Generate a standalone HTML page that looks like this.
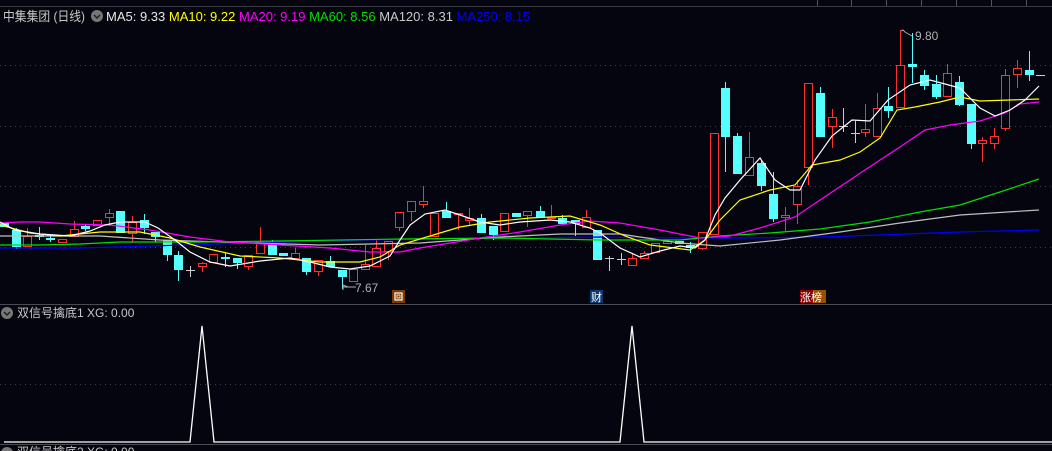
<!DOCTYPE html>
<html><head><meta charset="utf-8"><style>
html,body{margin:0;padding:0;background:#05050f;width:1052px;height:451px;overflow:hidden}
svg{display:block}
text{font-family:"Liberation Sans","Noto Sans CJK SC",sans-serif}
</style></head><body>
<svg id="s" width="1052" height="451" xmlns="http://www.w3.org/2000/svg">
<rect width="1052" height="451" fill="#05050f"/>
<line x1="0" y1="6.5" x2="1052" y2="6.5" stroke="#3a3a44"/>
<g stroke="#555" stroke-width="1">
<line x1="817.5" y1="0" x2="817.5" y2="6"/><line x1="851.5" y1="0" x2="851.5" y2="6"/><line x1="886.5" y1="0" x2="886.5" y2="6"/><line x1="921.5" y1="0" x2="921.5" y2="6"/><line x1="956.5" y1="0" x2="956.5" y2="6"/><line x1="991.5" y1="0" x2="991.5" y2="6"/><line x1="1026.5" y1="0" x2="1026.5" y2="6"/></g>
<g stroke="#3c3c46" stroke-dasharray="1,4">
<line x1="0" y1="65.5" x2="1052" y2="65.5"/><line x1="0" y1="126.5" x2="1052" y2="126.5"/><line x1="0" y1="186.5" x2="1052" y2="186.5"/><line x1="0" y1="247.5" x2="1052" y2="247.5"/><line x1="0" y1="384.5" x2="1052" y2="384.5"/></g>
<text x="3" y="21" font-size="13" fill="#c8c8c8" textLength="82" lengthAdjust="spacingAndGlyphs">中集集团 (日线)</text>
<circle cx="97" cy="16" r="6" fill="#777"/><path d="M94 15 L97 18 L100 15" stroke="#222" stroke-width="1.5" fill="none"/>
<text x="106" y="21" font-size="13"><tspan fill="#e8e8e8">MA5: 9.33 </tspan><tspan fill="#ffff00">MA10: 9.22 </tspan><tspan fill="#ff00ff">MA20: 9.19 </tspan><tspan fill="#00e000">MA60: 8.56 </tspan><tspan fill="#c8c8c8">MA120: 8.31 </tspan><tspan fill="#0000ff">MA250: 8.15</tspan></text>
<g id="c"></g>
<g fill="none" stroke-width="1.2">
<polyline stroke="#0000ff" points="0,248 80,248 150,246 250,243 360,240 440,239 520,238 600,237 680,238 740,238 820,237 880,235 960,232 1039,230"/>
<polyline stroke="#c0c0c0" points="0,236 40,236 100,236 160,240 220,242 320,245 420,243 500,237 560,234 620,234 680,243 720,246 780,240 840,232 900,223 960,215 1039,210"/>
<polyline stroke="#00e000" points="0,245 40,245 80,244 120,242 200,242 280,241 400,239 500,238 600,240 680,240 720,236 770,233 820,229 870,222 920,212 960,205 1000,192 1039,179"/>
<polyline stroke="#ff00ff" points="0,223 20,222 40,222 70,224 110,225 150,230 190,237 230,242 280,245 330,248 370,252 400,252 420,248 450,243 480,238 520,232 560,225 590,221 620,223 660,230 700,238 730,236 760,228 795,217 820,200 850,180 880,160 900,147 925,130 950,125 980,121 1005,113 1020,104 1039,102"/>
<polyline stroke="#ffff00" points="0,225 30,233 60,236 100,232 140,232 170,238 200,247 240,256 280,258 320,262 360,262 380,257 400,245 430,236 460,227 490,222 530,218 570,216 600,225 625,236 650,245 690,250 705,240 720,220 740,200 770,190 795,185 812,165 840,160 860,152 880,138 897,110 915,107 940,102 960,97 980,101 1010,100 1039,99"/>
<polyline stroke="#ffffff" points="0,222 15,230 40,234 70,236 90,231 105,225 120,222 145,222 158,228 175,240 190,252 210,262 230,266 260,261 290,258 310,262 330,267 350,269 370,266 390,256 400,240 410,225 425,214 445,210 460,215 480,222 500,225 520,222 550,220 570,222 590,228 600,233 620,248 640,257 660,251 680,246 695,248 705,240 715,215 725,198 740,180 760,158 775,180 790,190 800,190 815,160 832,136 852,120 870,121 888,100 910,85 930,80 945,84 960,88 980,108 995,116 1010,110 1025,100 1039,86"/>
</g>
<path d="M348 287 L343 285 L343 290 M343 287 L356 287" stroke="#aaa" fill="none"/>
<text x="355" y="292" font-size="12" fill="#b0b0b0">7.67</text>
<path d="M901 31 L903 30 L905 32 L912 36" stroke="#aaa" fill="none"/>
<text x="915" y="40" font-size="12" fill="#b0b0b0">9.80</text>
<rect x="392" y="290" width="13" height="13" fill="#7a3a00"/><rect x="395" y="293" width="7" height="7" fill="none" stroke="#fff" stroke-width="1.2"/><rect x="397" y="295" width="3" height="3" fill="none" stroke="#fff" stroke-width="0.8"/>
<rect x="590" y="290" width="13" height="13" fill="#0b3a6e"/><text x="591" y="301" font-size="11" fill="#fff">财</text>
<rect x="800" y="290" width="13" height="13" fill="#8a0000"/><rect x="813" y="290" width="13" height="13" fill="#9a5000"/><text x="800" y="301" font-size="11" fill="#fff">涨榜</text>
<line x1="0" y1="304.5" x2="1052" y2="304.5" stroke="#4a4a52"/>
<circle cx="7" cy="313" r="6" fill="#777"/><path d="M4 312 L7 315 L10 312" stroke="#222" stroke-width="1.5" fill="none"/>
<text x="17" y="317" font-size="12" fill="#c8c8c8">双信号擒底1 XG: 0.00</text>
<polyline fill="none" stroke="#fff" stroke-width="1.3" points="4,442 190,442 202,326 214,442 620,442 632,326 644,442 1052,442"/>
<line x1="0" y1="444.5" x2="1052" y2="444.5" stroke="#4a4a52"/>
<circle cx="7" cy="453" r="6" fill="#777"/>
<text x="17" y="456" font-size="12" fill="#c8c8c8">双信号擒底2 XG: 0.00</text>
</svg>
<script>
var d=[[4,223,227,223,227,'c'],[16,230,247,228,249,'c'],[27,236,247,228,247,'r'],[39,235,237,227,240,'c'],[50,238,240,236,242,'c'],[62,239,243,239,243,'r'],[74,229,237,221,237,'r'],[85,226,229,224,231,'c'],[97,220,226,220,226,'r'],[109,213,218,209,226,'r'],[120,211,233,211,233,'c'],[132,222,234,216,243,'r'],[144,220,228,214,234,'c'],[155,232,237,232,242,'c'],[167,240,255,240,261,'c'],[178,255,270,251,281,'c'],[190,270,270,266,277,'w'],[202,263,267,262,272,'r'],[213,254,263,254,263,'r'],[225,257,259,253,267,'c'],[237,258,263,258,269,'c'],[248,255,267,255,270,'r'],[260,242,254,227,254,'r'],[272,245,255,240,255,'c'],[283,253,256,253,256,'c'],[295,253,259,248,259,'r'],[306,258,272,258,275,'c'],[318,260,272,260,276,'r'],[330,261,267,256,267,'c'],[342,270,277,270,289,'c'],[353,269,282,269,282,'r'],[365,264,270,245,270,'r'],[376,248,267,239,267,'r'],[388,241,252,241,260,'r'],[399,212,228,212,231,'r'],[411,201,212,201,221,'r'],[423,201,205,186,208,'r'],[434,213,237,213,237,'r'],[446,211,218,202,218,'c'],[458,213,215,213,230,'r'],[469,218,221,208,225,'r'],[481,218,233,214,233,'c'],[493,226,235,226,240,'c'],[504,213,232,213,232,'r'],[516,213,217,213,217,'c'],[527,211,216,211,227,'r'],[540,211,218,206,218,'c'],[551,217,219,205,219,'r'],[562,218,224,215,224,'c'],[575,220,224,220,236,'c'],[586,217,228,210,228,'r'],[597,230,260,230,260,'c'],[609,258,258,256,271,'w'],[621,259,260,253,265,'c'],[632,258,266,253,266,'r'],[644,253,259,251,259,'r'],[655,243,253,243,253,'r'],[667,241,244,241,244,'r'],[679,241,244,241,244,'c'],[690,245,248,242,253,'c'],[702,232,249,232,250,'r'],[714,133,235,133,235,'r'],[725,88,137,82,172,'c'],[737,136,174,133,174,'c'],[749,157,176,132,176,'r'],[761,163,186,160,191,'c'],[773,194,219,172,222,'c'],[785,215,218,207,231,'r'],[797,186,205,180,224,'r'],[808,83,168,83,185,'r'],[820,93,137,87,137,'c'],[832,117,127,109,148,'r'],[843,126,126,108,132,'w'],[855,133,133,121,143,'w'],[865,129,133,104,137,'r'],[877,108,137,93,137,'r'],[888,106,111,87,118,'c'],[900,65,108,30,108,'r'],[912,64,67,33,83,'c'],[924,75,86,70,90,'c'],[936,84,97,75,99,'c'],[947,73,97,64,97,'r'],[959,82,105,76,106,'c'],[971,104,144,104,149,'c'],[982,140,144,137,162,'r'],[994,136,144,128,149,'r'],[1005,75,129,69,131,'r'],[1017,68,75,60,88,'r'],[1029,70,75,51,81,'c']];
var h='';d.forEach(function(a){var x=a[0],t=a[1],b=a[2],hi=a[3],lo=a[4],k=a[5];
if(k=='w'){h+='<line x1="'+x+'.5" y1="'+hi+'" x2="'+x+'.5" y2="'+lo+'" stroke="#ccc"/><line x1="'+(x-4)+'" y1="'+t+'.5" x2="'+(x+5)+'" y2="'+t+'.5" stroke="#ccc"/>';return;}
var col=k=='c'?'#55ffff':'#ff3030';
h+='<line x1="'+x+'.5" y1="'+hi+'" x2="'+x+'.5" y2="'+lo+'" stroke="'+col+'"/>';
var hh=Math.max(b-t,1);
if(k=='c')h+='<rect x="'+(x-4)+'" y="'+t+'" width="9" height="'+hh+'" fill="'+col+'"/>';
else h+='<rect x="'+(x-3.5)+'" y="'+(t+0.5)+'" width="8" height="'+Math.max(hh-1,1)+'" fill="#05050f" stroke="'+col+'"/>';});
h+='<line x1="1036" y1="75.5" x2="1045" y2="75.5" stroke="#ccc"/>';
document.getElementById('c').innerHTML=h;
</script>
</body></html>
